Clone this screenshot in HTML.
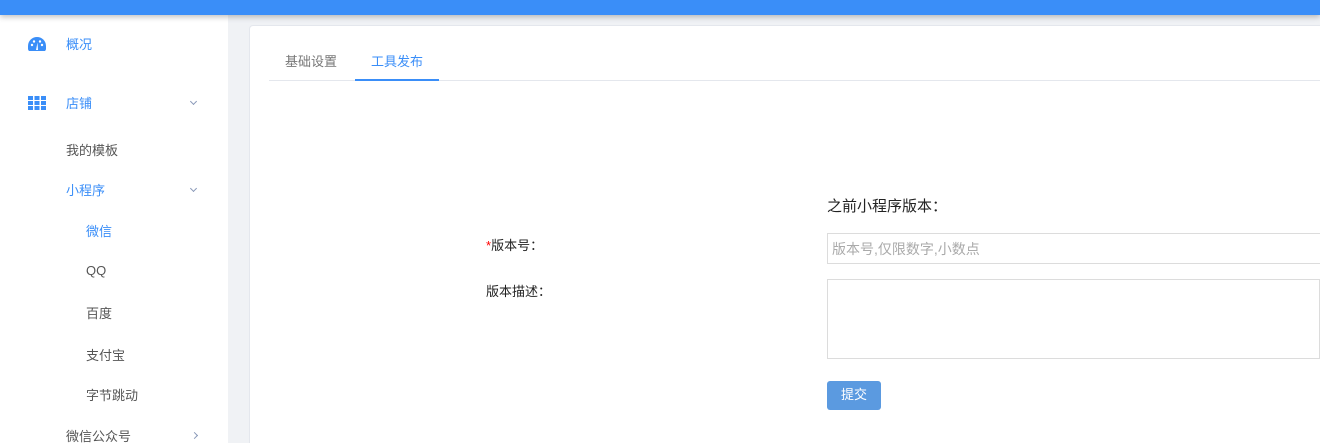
<!DOCTYPE html>
<html><head><meta charset="utf-8"><style>
*{margin:0;padding:0;box-sizing:border-box}
html{width:1320px;height:443px;overflow:hidden}
body{width:1320px;height:443px;overflow:hidden;background:#f0f2f5;font-family:"Liberation Sans","Noto Sans CJK SC",sans-serif;font-size:13px;position:relative}
.hdr{position:absolute;left:0;top:0;width:1320px;height:15px;background:#3a8ef8;box-shadow:0 2px 6px rgba(0,0,0,.25);z-index:3}
.side{position:absolute;left:0;top:0;width:228px;height:443px;background:#fff;z-index:2}
.it{position:absolute;white-space:nowrap;color:#555}
.blue{color:#3a8ef8}
.chev{position:absolute;left:191px;width:5px;height:5px;border-right:1px solid #8a99b8;border-bottom:1px solid #8a99b8}
.card{position:absolute;left:249px;top:25px;width:1100px;height:418px;background:#fff;border-radius:4px 0 0 0;border:1px solid #e4e7ed;border-bottom:none}
.tabs{position:absolute;left:269px;top:80px;width:1060px;height:1px;background:#e4e7ed}
.inp{position:absolute;border:1px solid #dcdcdc;background:#fff}
</style></head><body>
<div class="hdr"><div style="position:absolute;left:22px;top:-6px;width:14px;height:6px;border-radius:0 0 7px 7px;background:#1fa0e8"></div></div>
<div class="side">
<svg style="position:absolute;left:28px;top:37px" width="18" height="15" viewBox="0 0 18 15"><path d="M9 0A9 9 0 0 0 0 9v3a3 3 0 0 0 1 2h16a3 3 0 0 0 1-2V9A9 9 0 0 0 9 0z" fill="#3a8ef8"/><circle cx="4" cy="8" r="1.2" fill="#fff"/><circle cx="6" cy="4.5" r="1.2" fill="#fff"/><circle cx="12" cy="4.5" r="1.2" fill="#fff"/><circle cx="14" cy="8" r="1.2" fill="#fff"/><path d="M8 13L9.5 5.5 10 13z" fill="#fff"/></svg>
<div class="it blue" style="left:66px;top:34px">概况</div>
<svg style="position:absolute;left:28px;top:96px" width="18" height="14"><g fill="#3a8ef8"><rect x="0" y="0" width="5" height="4"/><rect x="6.5" y="0" width="5" height="4"/><rect x="13" y="0" width="5" height="4"/><rect x="0" y="5" width="5" height="4"/><rect x="6.5" y="5" width="5" height="4"/><rect x="13" y="5" width="5" height="4"/><rect x="0" y="10" width="5" height="4"/><rect x="6.5" y="10" width="5" height="4"/><rect x="13" y="10" width="5" height="4"/></g></svg>
<div class="it blue" style="left:66px;top:93px">店铺</div>
<div class="chev" style="top:99px;transform:rotate(45deg)"></div>
<div class="it" style="left:66px;top:140px">我的模板</div>
<div class="it blue" style="left:66px;top:180px">小程序</div>
<div class="chev" style="top:186px;transform:rotate(45deg)"></div>
<div class="it blue" style="left:86px;top:221px">微信</div>
<div class="it" style="left:86px;top:263px">QQ</div>
<div class="it" style="left:86px;top:303px">百度</div>
<div class="it" style="left:86px;top:345px">支付宝</div>
<div class="it" style="left:86px;top:385px">字节跳动</div>
<div class="it" style="left:66px;top:426px">微信公众号</div>
<div class="chev" style="top:433px;left:192px;transform:rotate(-45deg)"></div>
</div>
<div class="card"></div>
<div class="tabs"></div>
<div class="it" style="left:285px;top:51px;color:#777">基础设置</div>
<div class="it blue" style="left:371px;top:51px">工具发布</div>
<div style="position:absolute;left:355px;top:79px;width:84px;height:2px;background:#3a8ef8"></div>
<div class="it" style="left:827px;top:195px;font-size:15px;color:#222">之前小程序版本：</div>
<div class="it" style="left:486px;top:235px;color:#222"><span style="color:#f00">*</span>版本号：</div>
<div class="it" style="left:486px;top:281px;color:#222">版本描述：</div>
<div class="inp" style="left:827px;top:233px;width:520px;height:31px"><span style="position:absolute;left:4px;top:5px;color:#aaa;font-size:14px">版本号,仅限数字,小数点</span></div>
<div class="inp" style="left:827px;top:279px;width:493px;height:80px"></div>
<div style="position:absolute;left:827px;top:381px;width:54px;height:29px;background:#5b9ae0;border-radius:3px;color:#fff;text-align:center;line-height:28px">提交</div>
</body></html>
